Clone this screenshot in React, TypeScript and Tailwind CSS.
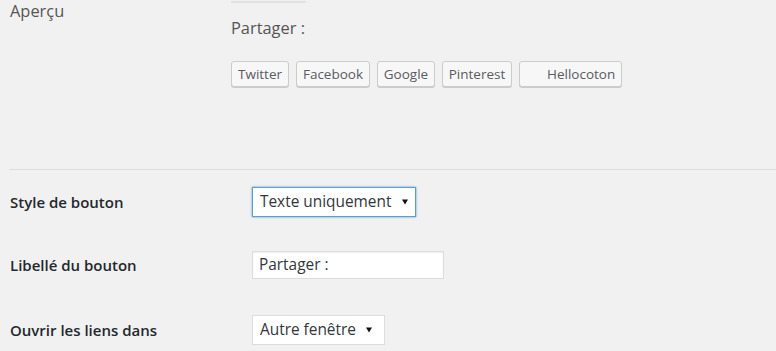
import React from "react";

const shareButtons = [
  { label: "Twitter", w: "w-[58px]" },
  { label: "Facebook", w: "w-[74px]" },
  { label: "Google", w: "w-[58px]" },
  { label: "Pinterest", w: "w-[70px]" },
];

const Arrow: React.FC = () => (
  <svg width="6" height="6" viewBox="0 0 6 6" className="shrink-0">
    <polygon points="0,0.5 6,0.5 3,5.5" fill="#111" />
  </svg>
);

const App: React.FC = () => {
  return (
    <div className="w-full min-h-screen bg-[#f1f1f1] font-['Open_Sans',sans-serif] text-[#444]">
      {/* Aperçu */}
      <div className="flex h-[169px]">
        <div className="w-[231px] pl-[10px] pt-[1px] text-[16.4px] leading-[20px] text-[#555]">
          Aperçu
        </div>
        <div className="flex flex-col">
          <div className="mt-[1px] h-[2px] w-[75px] bg-[#e2e2e2]"></div>
          <p className="mt-[15px] text-[16.4px] leading-[20px] text-[#555]">Partager :</p>
          <div className="mt-[23px] flex gap-[7px]">
            {shareButtons.map((b) => (
              <div
                key={b.label}
                className={`${b.w} h-[26px] flex items-center justify-center rounded-[3px] border border-[#cccccc] bg-[#f7f7f7] text-[13.5px] text-[#5a5a62] shadow-[0_1px_0_#cccccc]`}
              >
                {b.label}
              </div>
            ))}
            <div className="w-[103px] h-[26px] flex items-center pl-[27px] rounded-[3px] border border-[#cccccc] bg-[#f7f7f7] text-[13.5px] text-[#5a5a62] shadow-[0_1px_0_#cccccc]">
              Hellocoton
            </div>
          </div>
        </div>
      </div>
      <div className="ml-[9px] h-px bg-[#dcdcdc]"></div>

      {/* Style de bouton */}
      <div className="mt-[17px] flex items-center">
        <div className="w-[252px] pl-[10px] text-[15px] font-semibold text-[#23282d]">Style de bouton</div>
        <div className="w-[164px] h-[30px] flex items-center justify-between pl-[7px] pr-[7px] bg-white border border-[#5b9dd9] shadow-[0_0_2px_rgba(30,140,190,0.8)] text-[15.4px] text-[#32373c]">
          <span>Texte uniquement</span>
          <Arrow />
        </div>
      </div>

      {/* Libellé du bouton */}
      <div className="mt-[34px] flex items-center">
        <div className="w-[252px] pl-[10px] text-[15px] font-semibold text-[#23282d]">Libellé du bouton</div>
        <div className="w-[192px] h-[28px] flex items-center pl-[6px] bg-white border border-[#dddddd] shadow-[inset_0_1px_2px_rgba(0,0,0,0.07)] text-[15.4px] text-[#32373c]">
          Partager :
        </div>
      </div>

      {/* Ouvrir les liens dans */}
      <div className="mt-[36px] flex items-center">
        <div className="w-[252px] pl-[10px] text-[15px] font-semibold text-[#23282d]">Ouvrir les liens dans</div>
        <div className="w-[133px] h-[30px] flex items-center justify-between pl-[7px] pr-[12px] bg-white border border-[#dddddd] text-[15.4px] text-[#32373c]">
          <span>Autre fenêtre</span>
          <Arrow />
        </div>
      </div>
    </div>
  );
};

export default App;
